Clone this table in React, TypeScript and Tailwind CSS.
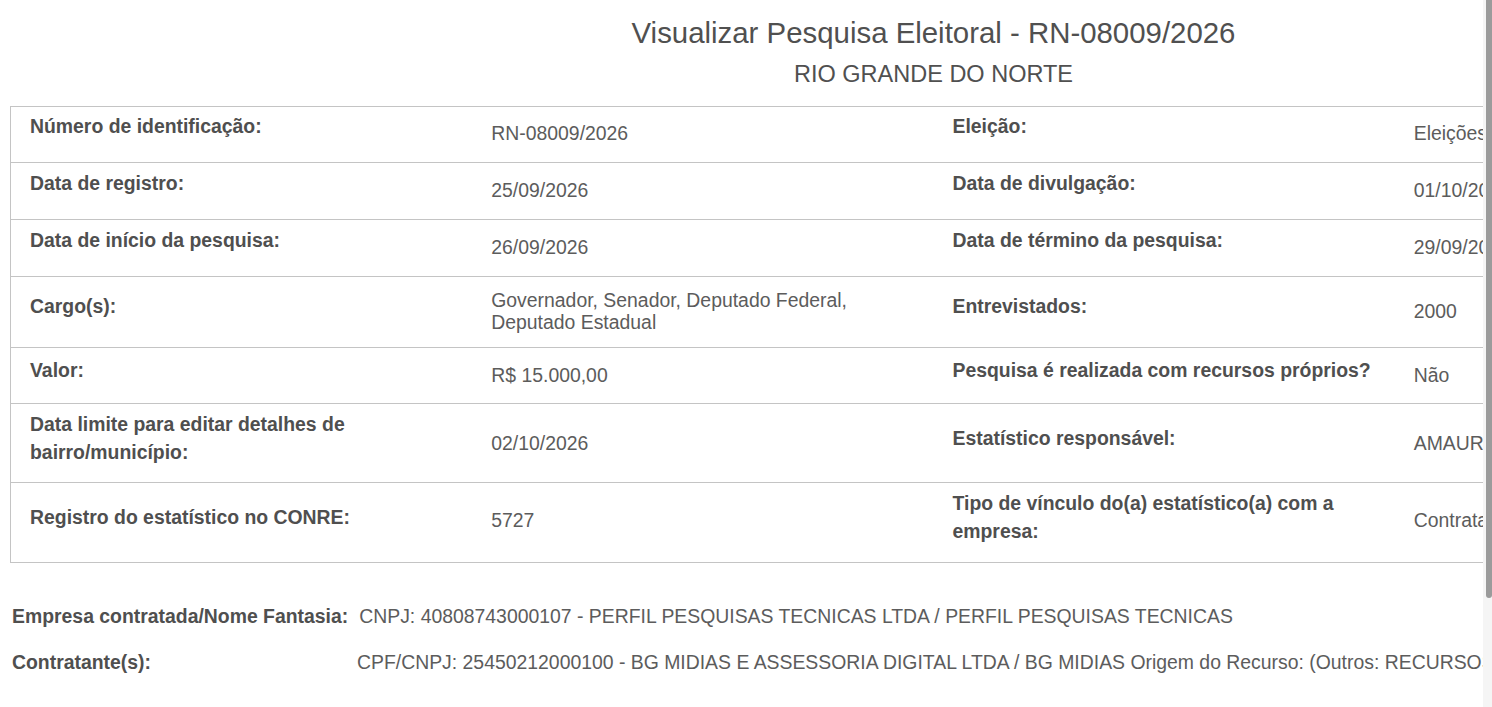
type Row = {
  h: string;
  lShift: string;
  vShift: string;
  l1: string;
  v1: string;
  l2: string;
  v2: string;
};

const rows: Row[] = [
  { h: "h-[56px]", lShift: "pb-[17px]", vShift: "pb-[3px]", l1: "Número de identificação:", v1: "RN-08009/2026", l2: "Eleição:", v2: "Eleições Gerais 2026" },
  { h: "h-[57px]", lShift: "pb-[17px]", vShift: "pb-[3px]", l1: "Data de registro:", v1: "25/09/2026", l2: "Data de divulgação:", v2: "01/10/2026" },
  { h: "h-[57px]", lShift: "pb-[17px]", vShift: "pb-[3px]", l1: "Data de início da pesquisa:", v1: "26/09/2026", l2: "Data de término da pesquisa:", v2: "29/09/2026" },
  { h: "h-[71px]", lShift: "pb-[12px]", vShift: "pb-[3px]", l1: "Cargo(s):", v1: "Governador, Senador, Deputado Federal, Deputado Estadual", l2: "Entrevistados:", v2: "2000" },
  { h: "h-[56px]", lShift: "pb-[12px]", vShift: "pb-[2px]", l1: "Valor:", v1: "R$ 15.000,00", l2: "Pesquisa é realizada com recursos próprios?", v2: "Não" },
  { h: "h-[79px]", lShift: "pb-[10px]", vShift: "pb-0", l1: "Data limite para editar detalhes de bairro/município:", v1: "02/10/2026", l2: "Estatístico responsável:", v2: "AMAURI" },
  { h: "h-[79px]", lShift: "pb-[11px]", vShift: "pb-[5px]", l1: "Registro do estatístico no CONRE:", v1: "5727", l2: "Tipo de vínculo do(a) estatístico(a) com a empresa:", v2: "Contratado(a)" },
];

function Label({ text, shift }: { text: string; shift: string }) {
  return (
    <div className={`flex items-center px-[19px] ${shift}`}>
      <span className="font-bold text-[#4f4f4f]">{text}</span>
    </div>
  );
}

function Value({ text, shift }: { text: string; shift: string }) {
  return (
    <div className={`flex items-center px-[19px] ${shift}`}>
      <span className="leading-[22px] text-[#5c5c5c]">{text}</span>
    </div>
  );
}

export default function App() {
  return (
    <div className="flex h-[707px] w-full overflow-hidden bg-white font-['Liberation_Sans',Arial,sans-serif] text-[19.4px] leading-[28px]">
      <div className="flex-1 overflow-hidden">
        <div className="w-[1867px] px-[10px]">
          <h1 className="mt-[17px] text-center text-[29.4px] leading-[32px] text-[#505050]">
            Visualizar Pesquisa Eleitoral - RN-08009/2026
          </h1>
          <div className="mt-[12px] text-center text-[23.5px] leading-[27px] text-[#505050]">
            RIO GRANDE DO NORTE
          </div>

          <div className="mt-[18px] border border-[#c4c4c4]">
            {rows.map((r, i) => (
              <div
                key={i}
                className={`grid grid-cols-4 ${r.h} ${i < rows.length - 1 ? "border-b border-[#c4c4c4]" : ""}`}
              >
                <Label text={r.l1} shift={r.lShift} />
                <Value text={r.v1} shift={r.vShift} />
                <Label text={r.l2} shift={r.lShift} />
                <Value text={r.v2} shift={r.vShift} />
              </div>
            ))}
          </div>

          <div className="mt-[39px] flex whitespace-nowrap pl-[2px]">
            <span className="font-bold text-[#4f4f4f]">Empresa contratada/Nome Fantasia:</span>
            <span className="ml-[11px] text-[#5c5c5c]">
              CNPJ: 40808743000107 - PERFIL PESQUISAS TECNICAS LTDA / PERFIL PESQUISAS TECNICAS
            </span>
          </div>
          <div className="mt-[18px] flex whitespace-nowrap pl-[2px]">
            <span className="w-[345px] font-bold text-[#4f4f4f]">Contratante(s):</span>
            <span className="text-[#5c5c5c]">
              CPF/CNPJ: 25450212000100 - BG MIDIAS E ASSESSORIA DIGITAL LTDA / BG MIDIAS Origem do Recurso: (Outros: RECURSOS PRÓPRIOS)
            </span>
          </div>
        </div>
      </div>

      <div className="flex w-[9px] shrink-0 flex-col bg-[#f5f5f5]">
        <div className="ml-auto h-[598px] w-[6px] rounded-b-[3px] bg-[#9b9b9b]" />
      </div>
    </div>
  );
}
